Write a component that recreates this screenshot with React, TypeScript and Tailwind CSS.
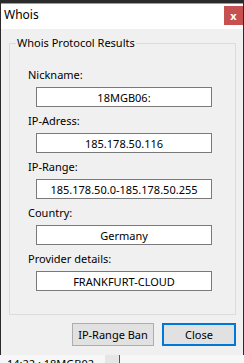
const fields = [
  { label: "Nickname:", value: "18MGB06:" },
  { label: "IP-Adress:", value: "185.178.50.116" },
  { label: "IP-Range:", value: "185.178.50.0-185.178.50.255" },
  { label: "Country:", value: "Germany" },
  { label: "Provider details:", value: "FRANKFURT-CLOUD" },
];

export default function App() {
  return (
    <div className="w-[244px] h-[363px] overflow-hidden bg-[#2b2b2b] flex flex-col font-['Segoe_UI','Noto_Sans',sans-serif] text-black">
      <div className="h-[3px] shrink-0" />

      {/* WINDOW */}
      <div className="ml-[1px] w-[242px] h-[352px] shrink-0 flex flex-col border-t border-[#6aa8d8] bg-[#f0f0f0]">
        {/* TITLE BAR */}
        <div className="h-[25px] shrink-0 flex items-start justify-between bg-white">
          <span className="pl-[3px] pt-[3px] text-[12px] leading-[16px]">Whois</span>
          <div className="mt-[2px] w-[19px] h-[19px] flex items-center justify-center bg-[#c75050] text-white text-[11px] font-bold leading-none">
            x
          </div>
        </div>

        {/* BODY */}
        <div className="flex flex-col pl-[8px] pr-[7px] pt-[6px] pb-[8px]">
          <fieldset className="border border-[#dcdcdc] pb-[23px]">
            <legend className="ml-[6px] px-[1px] text-[11px] leading-[16px]">
              Whois Protocol Results
            </legend>
            <div className="flex flex-col gap-[6px] pt-[16px]">
              {fields.map((f) => (
                <div key={f.label} className="flex flex-col">
                  <span className="pl-[18px] h-[16px] mb-[4px] text-[11px] leading-[16px]">{f.label}</span>
                  <div className="ml-[26px] w-[176px] h-[20px] flex items-center justify-center border border-[#7a7a7a] bg-white text-[11px] leading-none">
                    {f.value}
                  </div>
                </div>
              ))}
            </div>
          </fieldset>

          <div className="flex justify-end gap-[8px] mt-[8px]">
            <button className="w-[82px] h-[23px] border border-[#adadad] bg-[#e1e1e1] text-[11px] leading-none">
              IP-Range Ban
            </button>
            <button className="w-[74px] h-[23px] border-2 border-[#0078d7] bg-[#e1e1e1] text-[11px] leading-none">
              Close
            </button>
          </div>
        </div>
      </div>

      {/* BEHIND-WINDOW STRIP */}
      <div className="h-[8px] shrink-0 flex bg-[#f7f7f7] overflow-hidden">
        <span className="pl-[7px] pt-[3px] w-[105px] text-[11px] leading-[12px] whitespace-nowrap">14:22 : 18MGB02</span>
        <div className="w-[15px] bg-[#e6e6e6] border-r border-[#555]" />
      </div>
    </div>
  );
}
